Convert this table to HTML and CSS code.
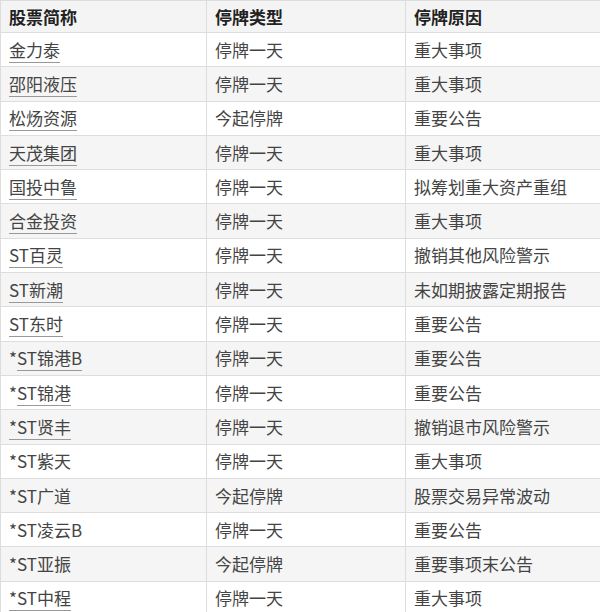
FILE: index.html
```html
<!DOCTYPE html>
<html lang="zh-CN">
<head>
<meta charset="utf-8">
<title>停牌</title>
<link rel="stylesheet" href="styles.css">
</head>
<body>
<table class="tbl">
  <thead>
    <tr><th class="c1">股票简称</th><th class="c2">停牌类型</th><th class="c3">停牌原因</th></tr>
  </thead>
  <tbody>
    <tr><td><a class="lk">金力泰</a></td><td>停牌一天</td><td>重大事项</td></tr>
    <tr><td><a class="lk">邵阳液压</a></td><td>停牌一天</td><td>重大事项</td></tr>
    <tr><td><a class="lk">松炀资源</a></td><td>今起停牌</td><td>重要公告</td></tr>
    <tr><td><a class="lk">天茂集团</a></td><td>停牌一天</td><td>重大事项</td></tr>
    <tr><td><a class="lk">国投中鲁</a></td><td>停牌一天</td><td>拟筹划重大资产重组</td></tr>
    <tr><td><a class="lk">合金投资</a></td><td>停牌一天</td><td>重大事项</td></tr>
    <tr><td><a class="lk">ST百灵</a></td><td>停牌一天</td><td>撤销其他风险警示</td></tr>
    <tr><td><a class="lk">ST新潮</a></td><td>停牌一天</td><td>未如期披露定期报告</td></tr>
    <tr><td><a class="lk">ST东时</a></td><td>停牌一天</td><td>重要公告</td></tr>
    <tr><td>*<a class="lk">ST锦港B</a></td><td>停牌一天</td><td>重要公告</td></tr>
    <tr><td>*<a class="lk">ST锦港</a></td><td>停牌一天</td><td>重要公告</td></tr>
    <tr><td><a class="lk">*ST贤丰</a></td><td>停牌一天</td><td>撤销退市风险警示</td></tr>
    <tr><td>*ST紫天</td><td>停牌一天</td><td>重大事项</td></tr>
    <tr><td>*ST广道</td><td>今起停牌</td><td>股票交易异常波动</td></tr>
    <tr><td>*ST凌云B</td><td>停牌一天</td><td>重要公告</td></tr>
    <tr><td>*ST亚振</td><td>今起停牌</td><td>重要事项末公告</td></tr>
    <tr><td><a class="lk">*ST中程</a></td><td>停牌一天</td><td>重大事项</td></tr>
  </tbody>
</table>
</body>
</html>
```
FILE: styles.css
```css
html, body {
  margin: 0;
  padding: 0;
  background: #ffffff;
}
body {
  font-family: "Noto Sans CJK SC", "Noto Sans", sans-serif;
  font-size: 17px;
  color: #444444;
  overflow: hidden;
}
.tbl {
  border-collapse: collapse;
  width: 604px;
  table-layout: fixed;
  border-top: 1px solid #666666;
  border-left: 1px solid #dddddd;
}
.c1 { width: 189px; }
.c2 { width: 182px; }
.c3 { width: auto; }
.tbl th, .tbl td {
  border: 1px solid #dddddd;
  padding: 0 8px;
  text-align: left;
  line-height: 20px;
  white-space: nowrap;
}
.tbl th {
  height: 31px;
  background: #f4f4f4;
  color: #222222;
  font-weight: bold;
}
.tbl td {
  height: 33.3px;
}
.tbl tbody tr:nth-child(even) td {
  background: #f5f5f5;
}
.lk {
  color: #444444;
  text-decoration: none;
  border-bottom: 1px solid #999999;
}
```
